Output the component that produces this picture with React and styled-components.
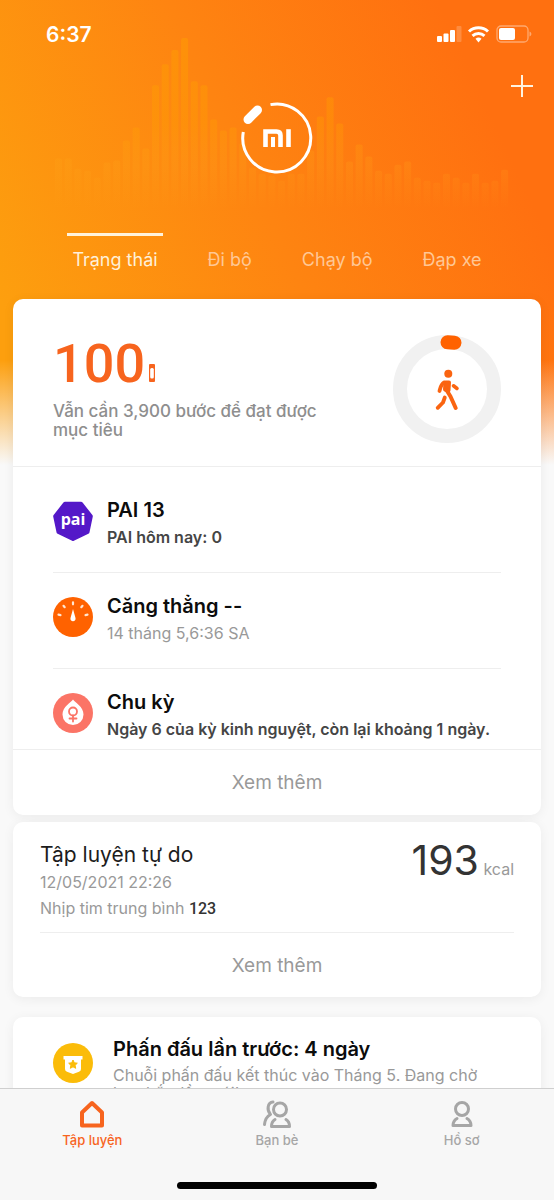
import { useState } from "react"
import styled, { createGlobalStyle } from "styled-components"

const orange = "#f7641e"
const gray = "#999"
const lineColor = "#eeeeee"

const tabs = ["Trạng thái", "Đi bộ", "Chạy bộ", "Đạp xe"]

// height of every bar of the header wave, left to right
const wave = [
  50, 50, 40, 38, 31, 46, 48, 68, 81, 60, 123, 144, 158, 170, 127, 123, 89, 78, 81, 65,
  41, 35, 33, 28, 35, 35, 58, 92, 111, 85, 47, 64, 52, 38, 35, 44, 47, 31, 28, 26, 35,
  31, 26, 35, 26, 28, 39,
]

export default function App() {
  const [tab, setTab] = useState(0)

  return (
    <Screen>
      <GlobalStyle />
      <Content>
        <Header>
          <WaveBars />
          <StatusBar>
            <time>6:37</time>
            <StatusIcons />
          </StatusBar>
          <AddRow>
            <AddButton aria-label="Thêm">
              <svg width="22" height="22" viewBox="0 0 22 22" stroke="#fff3e0" strokeWidth="2">
                <path d="M11 0v22M0 11h22" />
              </svg>
            </AddButton>
          </AddRow>
          <BandLogo />
          <Tabs role="tablist">
            {tabs.map((name, i) => (
              <Tab key={name} role="tab" aria-selected={i === tab} $active={i === tab} onClick={() => setTab(i)}>
                {name}
              </Tab>
            ))}
          </Tabs>
        </Header>

        <Cards>
          <Card>
            <Goal>
              <div>
                <Steps>
                  100
                  <svg width="6" height="18" viewBox="0 0 6 18" fill="none">
                    <rect width="6" height="18" rx="1" fill={orange} />
                    <rect x="1.200" y="4" width="3.600" height="10.500" rx="1.500" fill="#fff" />
                  </svg>
                </Steps>
                <GoalText>Vẫn cần 3,900 bước để đạt được mục tiêu</GoalText>
              </div>
              <StepRing />
            </Goal>
            <List>
              <Item>
                <PaiIcon />
                <ItemText>
                  <ItemTitle>PAI 13</ItemTitle>
                  <ItemInfo $strong>PAI hôm nay: 0</ItemInfo>
                </ItemText>
              </Item>
              <Item>
                <StressIcon />
                <ItemText>
                  <ItemTitle>Căng thẳng --</ItemTitle>
                  <ItemInfo>14 tháng 5,6:36 SA</ItemInfo>
                </ItemText>
              </Item>
              <Item>
                <CycleIcon />
                <ItemText>
                  <ItemTitle>Chu kỳ</ItemTitle>
                  <ItemInfo $strong>Ngày 6 của kỳ kinh nguyệt, còn lại khoảng 1 ngày.</ItemInfo>
                </ItemText>
              </Item>
            </List>
            <MoreButton>Xem thêm</MoreButton>
          </Card>

          <Card>
            <Workout>
              <div>
                <WorkoutTitle>Tập luyện tự do</WorkoutTitle>
                <WorkoutInfo>12/05/2021 22:26</WorkoutInfo>
                <WorkoutInfo>
                  Nhịp tim trung bình <b>123</b>
                </WorkoutInfo>
              </div>
              <Calories>
                <strong>193</strong> kcal
              </Calories>
            </Workout>
            <MoreButton $plain>Xem thêm</MoreButton>
          </Card>

          <StreakCard>
            <BadgeSlot>
              <BadgeIcon />
            </BadgeSlot>
            <div>
              <ItemTitle>Phấn đấu lần trước: 4 ngày</ItemTitle>
              <StreakInfo>Chuỗi phấn đấu kết thúc vào Tháng 5. Đang chờ bạn bắt đầu mới!</StreakInfo>
            </div>
          </StreakCard>
        </Cards>
      </Content>

      <BottomBar>
        <NavRow>
          <NavLink href="#tap-luyen" $active>
            <svg width="26" height="28" viewBox="0 0 26 28" fill="none" stroke="currentColor" strokeWidth="4" strokeLinejoin="round">
              <path d="M3 25.500V12.500L13 3l10 9.500V25.500z" />
            </svg>
            Tập luyện
          </NavLink>
          <NavLink href="#ban-be">
            <svg width="30" height="28" viewBox="0 0 30 28" fill="none" stroke="currentColor" strokeWidth="3" strokeLinecap="round" strokeLinejoin="round">
              <circle cx="18" cy="9.500" r="6.500" />
              <path d="M13 19.500c-2.500 1.500-3.500 3.500-3.500 7h18c0-3.500-1-5.500-3.500-7" />
              <path d="M11 2C5.500 2.500 4.500 10 8.500 14.500C4.500 16.500 3 20 2.500 24.500" />
            </svg>
            Bạn bè
          </NavLink>
          <NavLink href="#ho-so">
            <svg width="24" height="28" viewBox="0 0 24 28" fill="none" stroke="currentColor" strokeWidth="3" strokeLinecap="round" strokeLinejoin="round">
              <circle cx="12" cy="9" r="6.500" />
              <path d="M7 18.500c-2.500 1.500-4 3.500-4 7h18c0-3.500-1.500-5.500-4-7" />
            </svg>
            Hồ sơ
          </NavLink>
        </NavRow>
        <HomeIndicator />
      </BottomBar>
    </Screen>
  )
}

function WaveBars() {
  return (
    <Wave viewBox="0 0 452 170" aria-hidden="true">
      <defs>
        <linearGradient id="bar" gradientUnits="userSpaceOnUse" x1="0" y1="0" x2="0" y2="170">
          <stop offset="0" stopColor="#ffa000" stopOpacity="0.45" />
          <stop offset="0.5" stopColor="#ffa000" stopOpacity="0.34" />
          <stop offset="0.75" stopColor="#ffa61a" stopOpacity="0.2" />
          <stop offset="1" stopColor="#ffa61a" stopOpacity="0" />
        </linearGradient>
      </defs>
      {wave.map((height, i) => (
        <rect key={i} x={i * 9.65} y={170 - height} width="7" height={height} rx="2" fill="url(#bar)" />
      ))}
    </Wave>
  )
}

function StatusIcons() {
  return (
    <svg width="96" height="18" viewBox="0 0 96 18" fill="#fff">
      <rect x="1" y="11" width="5" height="6" rx="1" />
      <rect x="7.500" y="8.500" width="5" height="8.500" rx="1" />
      <rect x="14" y="5" width="5" height="12" rx="1" />
      <rect x="20.500" y="1" width="5" height="16" rx="1" opacity="0.2" />
      <g fill="none" stroke="#fff" strokeWidth="3">
        <path d="M33 6.500a14 14 0 0 1 19 0" />
        <path d="M36.500 10.800a9 9 0 0 1 12 0" />
      </g>
      <path d="M39.500 13.800a4.500 4.500 0 0 1 6 0L42.500 17.500z" />
      <rect x="61" y="1" width="31" height="16" rx="4" fill="none" stroke="#fff" strokeOpacity="0.4" strokeWidth="1.300" />
      <rect x="63" y="3" width="16" height="12" rx="2" />
      <path d="M93.500 6.500c2.500 1 2.500 4 0 5z" opacity="0.4" />
    </svg>
  )
}

function BandLogo() {
  return (
    <Logo viewBox="0 0 72 72" fill="none" stroke="#fff">
      <path d="M29.500 2.600A34 34 0 1 1 2.300 30" strokeWidth="3" />
      <path d="M7 17.500L16.500 8" strokeWidth="9" strokeLinecap="round" />
      <path d="M24.500 45V29.500h11q4 0 4 4V45" strokeWidth="4.600" />
      <path d="M32 35v10" strokeWidth="4" />
      <path d="M47.500 27.200V45" strokeWidth="4.600" />
    </Logo>
  )
}

function StepRing() {
  return (
    <Ring viewBox="0 0 108 108" fill="none">
      <circle cx="54" cy="54" r="47" stroke="#f1f1f1" strokeWidth="14" />
      <path d="M54.500 7.300l7 .4" stroke="#ff6200" strokeWidth="14" strokeLinecap="round" />
      <g stroke="#fa6410" strokeLinecap="round" strokeLinejoin="round">
        <circle cx="55.300" cy="38.700" r="4" fill="#fa6410" stroke="none" />
        <path d="M52.500 47.500h3.500l-.5 8-3.500-1z" fill="#fa6410" strokeWidth="4" />
        <path d="M51 47.500c-3 1.500-3.500 5-4.500 8.500" strokeWidth="3.800" />
        <path d="M60.500 50.800l3.500 2.700" strokeWidth="3.600" />
        <path d="M53.500 55l4 6.500 5.200 11.500" strokeWidth="4" />
        <path d="M51.800 62.500l-1.800 5-5.300 5.300" strokeWidth="3.800" />
      </g>
    </Ring>
  )
}

function PaiIcon() {
  return (
    <Icon viewBox="0 0 40 40">
      <path
        d="M12 2.700h16L37.800 15.300 34.500 31 20 38 5.500 31 2.200 15.300z"
        fill="#5418c8"
        stroke="#5418c8"
        strokeWidth="4"
        strokeLinejoin="round"
      />
      <PaiText x="20" y="24" textAnchor="middle">pai</PaiText>
    </Icon>
  )
}

function StressIcon() {
  return (
    <Icon viewBox="0 0 40 40">
      <circle cx="20" cy="20" r="20" fill="#ff6200" />
      <path
        d="M5.500 17.700l2 .4M10.500 8.800l1.200 1.400M20 5.300v2M29.500 8.800l-1.200 1.400M34.500 17.700l-2 .4"
        stroke="#ffe6d2"
        strokeWidth="2.200"
        strokeLinecap="round"
      />
      <path d="M20 12l-2.500 9a2.600 2.600 0 1 0 5 0z" fill="#fff" />
    </Icon>
  )
}

function CycleIcon() {
  return (
    <Icon viewBox="0 0 40 40">
      <circle cx="20" cy="20" r="20" fill="#fb7466" />
      <path d="M20 6.500c2 3 10.500 7 10.500 15a10.500 10.500 0 0 1-21 0c0-8 8.500-12 10.500-15z" fill="#fff" />
      <g fill="none" stroke="#fb7466" strokeWidth="1.800" strokeLinecap="round">
        <circle cx="20" cy="18.500" r="4" />
        <path d="M20 22.500v6M16.500 25.500h7" />
      </g>
    </Icon>
  )
}

function BadgeIcon() {
  return (
    <Icon viewBox="0 0 40 40">
      <circle cx="20" cy="20" r="20" fill="#fbbc09" />
      <path d="M10.500 13h19v3.500h-1.500V26q0 2-2 2.800L20 31l-6-2.200q-2-.8-2-2.800v-9.500h-1.500z" fill="#fff" />
      <path
        d="M20 17l1.300 2.800 3 .4-2.200 2.100.6 3-2.700-1.500-2.700 1.500.6-3-2.200-2.100 3-.4z"
        fill="#fbbc09"
        stroke="#fbbc09"
        strokeLinejoin="round"
      />
    </Icon>
  )
}

const GlobalStyle = createGlobalStyle`
  * {
    box-sizing: border-box;
    margin: 0;
    padding: 0;
  }
  body {
    font-family: Inter, "Noto Sans", sans-serif;
    background-color: #f8f8f8;
  }
  button {
    border: none;
    background: none;
    font-family: inherit;
    cursor: pointer;
  }
`

const Screen = styled.div`
  height: 100vh;
  display: flex;
  flex-direction: column;
`

const Content = styled.main`
  flex: 1;
  min-height: 0;
  overflow-y: auto;
  scrollbar-width: none;
  background:
    linear-gradient(to bottom, transparent 360px, #f9f9f9 465px),
    linear-gradient(65deg, #fd9f0e 10%, #fe8411 50%, #ff7010 85%) 0 0 / 100% 466px no-repeat;
`

const Header = styled.header`
  position: relative;
  display: flex;
  flex-direction: column;
  padding-top: 22px;
`

const Wave = styled.svg`
  position: absolute;
  left: 10%;
  top: 38px;
  width: 82%;
`

const StatusBar = styled.div`
  position: relative;
  display: flex;
  align-items: center;
  justify-content: space-between;
  padding: 0 22px 0 46px;
  height: 24px;
  color: #fff;
  font-size: 21px;
  font-weight: 600;
`

const AddRow = styled.div`
  display: flex;
  justify-content: flex-end;
  padding: 29px 21px 0 0;
`

const AddButton = styled.button`
  position: relative;
  width: 22px;
  height: 22px;
`

const Logo = styled.svg`
  position: relative;
  align-self: center;
  width: 72px;
  height: 72px;
  margin-top: 5px;
`

const Tabs = styled.div`
  position: relative;
  display: flex;
  justify-content: center;
  gap: 40px;
  margin-top: 59px;
`

const Tab = styled.button`
  padding: 12px 5px 0;
  border-top: 3px solid ${({ $active }) => ($active ? "#fff3dc" : "transparent")};
  color: ${({ $active }) => ($active ? "#fff0d8" : "#ffc795")};
  font-size: 18px;
  line-height: 24px;
`

const Cards = styled.div`
  display: flex;
  flex-direction: column;
  padding: 27px 13px;
  gap: 7px;
`

const Card = styled.section`
  background-color: white;
  border-radius: 10px;
  box-shadow: 0 2px 12px rgba(0, 0, 0, 0.06);
`

const Goal = styled.div`
  display: flex;
  align-items: flex-start;
  justify-content: space-between;
  gap: 60px;
  padding: 36px 40px 23px;
  border-bottom: 1px solid ${lineColor};
`

const Steps = styled.h1`
  display: flex;
  align-items: baseline;
  gap: 4px;
  color: ${orange};
  font-family: Roboto, sans-serif;
  font-size: 54px;
  font-weight: 500;
  line-height: 58px;
  margin-bottom: 9px;
`

const GoalText = styled.p`
  color: #8e8e8e;
  font-size: 17px;
  font-weight: 500;
  line-height: 19px;
`

const Ring = styled.svg`
  flex: none;
  width: 108px;
  height: 108px;
`

const List = styled.ul`
  list-style: none;
  padding: 10px 40px 0;
`

const Item = styled.li`
  display: flex;
  align-items: center;
  gap: 14px;
  padding: 17px 0 25px;
  border-bottom: 1px solid ${lineColor};
  &:last-child {
    padding-bottom: 10px;
    border-bottom: none;
  }
`

const Icon = styled.svg`
  flex: none;
  width: 40px;
  height: 40px;
`

const PaiText = styled.text`
  fill: white;
  font-family: "Open Sans", sans-serif;
  font-size: 16px;
  font-weight: 700;
`

const ItemText = styled.div`
  padding-top: 4px;
  white-space: nowrap;
`

const ItemTitle = styled.h2`
  color: #0c0c0c;
  font-size: 20px;
  font-weight: 600;
  line-height: 24px;
`

const ItemInfo = styled.p`
  margin-top: 5px;
  color: ${({ $strong }) => ($strong ? "#454545" : gray)};
  font-size: 16px;
  font-weight: ${({ $strong }) => ($strong ? 600 : 400)};
  line-height: 20px;
`

const MoreButton = styled.button`
  display: block;
  width: 100%;
  height: ${({ $plain }) => ($plain ? "64px" : "66px")};
  border-top: ${({ $plain }) => ($plain ? "none" : `1px solid ${lineColor}`)};
  color: ${gray};
  font-size: 19px;
`

const Workout = styled.div`
  display: flex;
  justify-content: space-between;
  align-items: flex-start;
  margin: 0 27px;
  padding: 19px 0 10px;
  border-bottom: 1px solid ${lineColor};
`

const WorkoutTitle = styled.h2`
  color: #1c1c1c;
  font-size: 21px;
  font-weight: 400;
  line-height: 28px;
`

const WorkoutInfo = styled.p`
  color: ${gray};
  font-size: 16px;
  line-height: 26px;
  b {
    color: #333;
    font-family: Roboto, sans-serif;
    font-weight: 500;
  }
`

const Calories = styled.p`
  color: ${gray};
  font-size: 16px;
  line-height: 38px;
  strong {
    color: #333;
    font-size: 41px;
    font-weight: 400;
  }
`

const StreakCard = styled(Card)`
  display: flex;
  align-items: flex-start;
  gap: 20px;
  margin-top: 13px;
  padding: 20px 50px 20px 40px;
`

const BadgeSlot = styled.div`
  display: flex;
  padding-top: 6px;
`

const StreakInfo = styled.p`
  margin-top: 5px;
  color: ${gray};
  font-size: 16px;
  line-height: 18px;
`

const BottomBar = styled.footer`
  display: flex;
  flex-direction: column;
  align-items: center;
  border-top: 1px solid #cfcfcf;
  background-color: #f7f7f7;
  padding: 11px 0;
`

const NavRow = styled.nav`
  display: flex;
  width: 100%;
`

const NavLink = styled.a`
  flex: 1;
  display: flex;
  flex-direction: column;
  align-items: center;
  gap: 4px;
  color: ${({ $active }) => ($active ? orange : "#a6a6a6")};
  font-size: 13px;
  font-weight: 500;
  line-height: 16px;
  text-decoration: none;
`

const HomeIndicator = styled.div`
  width: 36%;
  height: 7px;
  margin-top: 34px;
  border-radius: 4px;
  background-color: black;
`
